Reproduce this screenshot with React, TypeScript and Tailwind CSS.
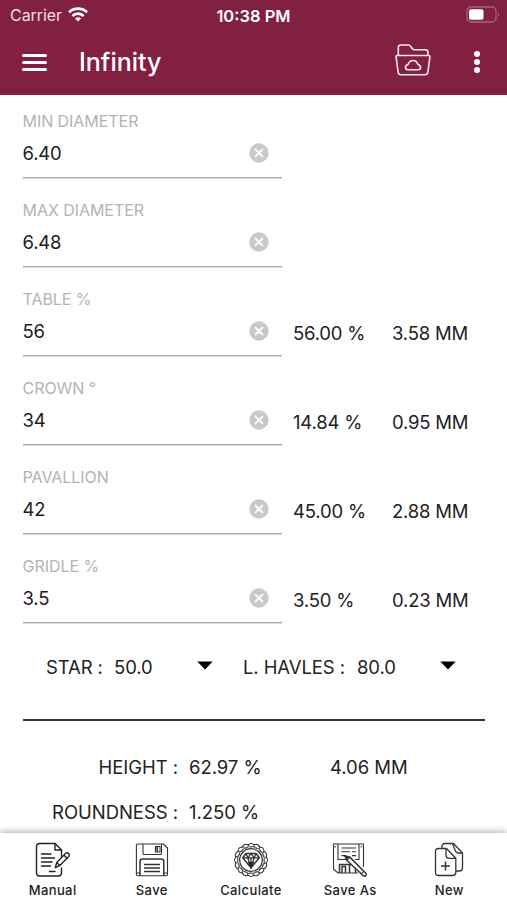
import type { ReactNode } from "react";

type Field = {
  label: string;
  value: string;
  percent?: string;
  mm?: string;
};

const FIELDS: Field[] = [
  { label: "MIN DIAMETER", value: "6.40" },
  { label: "MAX DIAMETER", value: "6.48" },
  { label: "TABLE %", value: "56", percent: "56.00 %", mm: "3.58 MM" },
  { label: "CROWN °", value: "34", percent: "14.84 %", mm: "0.95 MM" },
  { label: "PAVALLION", value: "42", percent: "45.00 %", mm: "2.88 MM" },
  { label: "GRIDLE %", value: "3.5", percent: "3.50 %", mm: "0.23 MM" },
];

// 16 bumps around the badge rim
const RIM_ANGLES = Array.from({ length: 16 }, (_, i) => i * 22.5);

function WifiIcon() {
  return (
    <svg width="20" height="15" viewBox="0 0 20 15" fill="none" stroke="#fff" strokeWidth="2.7">
      <path d="M1 5.3C6 .4 14 .4 19 5.3" />
      <path d="M4.4 8.9c3.2-3 8-3 11.2 0" />
      <path d="M10 14.6 6.9 11.5c1.7-1.6 4.5-1.6 6.2 0z" fill="#fff" stroke="none" />
    </svg>
  );
}

function BatteryIcon() {
  return (
    <svg width="34" height="18" viewBox="0 0 34 18" fill="none">
      <rect x="1" y="1" width="29" height="15" rx="4" stroke="#a8637d" strokeWidth="1.3" />
      <rect x="3" y="3.3" width="14.5" height="10.4" rx="2" fill="#fff" />
      <path d="M31.8 6.3c1.7.7 1.7 3.7 0 4.4z" fill="#a8637d" />
    </svg>
  );
}

function FolderCloudIcon() {
  return (
    <svg width="36" height="32" viewBox="0 0 36 32" fill="none" stroke="#ffe4ed" strokeWidth="1.6" strokeLinejoin="round" strokeLinecap="round">
      <path d="M3.3 11.3V3.5Q3.3 1 5.8 1h7.3q1.5 0 2.3 1.1l2 2.7q.8 1 2.1 1h11q2.4 0 2.4 2.4v3.1" />
      <path d="M2.5 11.5h31q1.6 0 1.4 1.5l-2 15q-.3 2.8-3 2.8H6.1q-2.7 0-3-2.8L1.1 13q-.2-1.5 1.4-1.5z" />
      <path d="M13 25.8c-3.4 0-3.6-4 .2-5.6 1.8-5 7.8-5 9.6 0 3.8 1.600 3.600 5.600.2 5.600z" />
    </svg>
  );
}

function ClearIcon() {
  return (
    <svg width="20" height="20" viewBox="0 0 20 20">
      <circle cx="10" cy="10" r="9.7" fill="#c9c9c9" />
      <path d="m6.6 6.6 6.8 6.8m0-6.8-6.8 6.8" stroke="#fff" strokeWidth="2" strokeLinecap="round" />
    </svg>
  );
}

function ManualIcon() {
  return (
    <svg width="36" height="36" viewBox="0 0 36 36" fill="none" stroke="#222" strokeWidth="1.4" strokeLinecap="round" strokeLinejoin="round">
      <path d="M26.5 26v5q0 3-3 3h-19q-3 0-3-3V4.500q0-3 3-3H20L26.5 8v6.5" />
      <path d="M20 1.5V8h6.5" />
      <path d="M6.5 12H16M6.5 16h13M6.5 20H17M6.5 24h9M14.5 29.5H20" />
      <path d="m20.3 25.700 1.4-5.2 9-9.2q1.600-1.200 3 .1 1.300 1.400.1 3l-9 9.200zM29 13.300l3.100 3M21.700 20.500l3.100 3.100" />
    </svg>
  );
}

function SaveIcon() {
  return (
    <svg width="34" height="36" viewBox="0 0 34 36" fill="none" stroke="#333" strokeWidth="1.1" strokeLinejoin="round">
      <path d="M3 2h25.5l4 4v26q0 1.8-1.8 1.8H3.200q-1.800 0-1.800-1.800V3.600Q1.400 2 3 2z" />
      <path d="M8 2v9.500q0 1 1 1h16.500q1 0 1-1V2M20.500 4.500H25V10h-4.500z" />
      <path d="M22.2 5v4.5" strokeWidth="1.6" />
      <path d="M5 33.800V19.500Q5 17 7.500 17h18.800q2.500 0 2.500 2.500v14.300" strokeWidth="1.5" />
      <path d="M9 22.5h16M9 26h16M9 29.500h16" strokeWidth="1.3" />
      <path d="M1.5 31H5M29 31h3.500" />
    </svg>
  );
}

function CalculateIcon() {
  return (
    <svg width="36" height="36" viewBox="0 0 36 36" fill="none" stroke="#333" strokeWidth="1">
      {RIM_ANGLES.map((angle) => (
        <path key={angle} d="M14.8 2.8q3.200-3 6.400 0M14.8 2.8q2.500 3.600 5.700 1.700" transform={`rotate(${angle} 18 18)`} />
      ))}
      <circle cx="18" cy="18" r="13.5" strokeWidth=".8" stroke="#666" />
      <circle cx="18" cy="18" r="11.3" strokeWidth="1.2" />
      <path d="M13 11.5h10l3.3 4.3L18 25.800 9.700 15.800z" strokeWidth="1.5" strokeLinejoin="round" />
      <path d="M9.700 15.800h16.600M13 11.500l1.800 4.300 3.200-4.300 3.200 4.300 1.800-4.300M14.800 15.800 18 25.800l3.200-10M18 16v9" strokeWidth="1.3" />
      <path d="m14.800 20 3.200 5.500 3.200-5.500z" fill="#222" stroke="none" />
    </svg>
  );
}

function SaveAsIcon() {
  return (
    <svg width="36" height="36" viewBox="0 0 36 36" fill="none" stroke="#333" strokeWidth="1.1" strokeLinejoin="round">
      <path d="M26 31H6l-4.500-4V2h30v23" />
      <path d="M6 2v15.500h10M27 2v15.500h-4" />
      <path d="M9.500 6H24M9.500 9.800H18m2 0h4M9.500 13.600H14m6 0h4" />
      <path d="M3.200 4v1.500M29.200 4v1.500" />
      <path d="M7.500 31v-8.500h13M10 31v-6.500h3.500V31M17.500 31v-8M23.500 27v4" strokeWidth="1.5" />
      <path d="m13 14 4.800 1.100 16 16.200q1 1.200 0 2.400-1.200 1-2.500 0L15 18.500z" fill="#fff" strokeWidth="1.5" />
      <path d="m17.800 15.100-2.800 3.400M31.800 29.300l-2.700 2.500" />
      <path d="m13 14 3.500 1-2 2.200z" fill="#222" />
    </svg>
  );
}

function NewIcon() {
  return (
    <svg width="30" height="36" viewBox="0 0 30 36" fill="none" stroke="#333" strokeWidth="1.3" strokeLinejoin="round">
      <path d="M8 6.500v-2q0-3 3-3h8.500l9 9.500v15q0 3-3 3H22" />
      <path d="M18.500 1.500 21 8q1 3 3.500 3h4" />
      <path d="M4.500 6.500h8l9.300 9.800v14.200q0 3-3 3H4.500q-3 0-3-3v-21q0-3 3-3z" fill="#fff" />
      <path d="M12 6.500v6.800q0 3 3 3h6.800" />
      <path d="M11.500 19.500v9M7 24h9" strokeWidth="1.5" />
    </svg>
  );
}

const TABS: { label: string; icon: ReactNode }[] = [
  { label: "Manual", icon: <ManualIcon /> },
  { label: "Save", icon: <SaveIcon /> },
  { label: "Calculate", icon: <CalculateIcon /> },
  { label: "Save As", icon: <SaveAsIcon /> },
  { label: "New", icon: <NewIcon /> },
];

function Caret() {
  return (
    <svg className="mb-[3px]" width="16" height="9" viewBox="0 0 16 9">
      <path d="M.3.500h15.400L8 8.500z" fill="#000" />
    </svg>
  );
}

function FieldRow({ field }: { field: Field }) {
  return (
    <div className="flex h-[89px] pl-[22.5px]">
      <div className="flex h-[83.5px] w-[259px] flex-col pt-[17px]">
        <span className="text-[16px] leading-[18px] tracking-[-0.05px] text-[#b3b3b3]">{field.label}</span>
        <div className="mt-[11px] flex h-6 items-center justify-between pr-[12.6px]">
          <span className="text-[18.5px] leading-6 tracking-[-0.2px] text-[#1c1c1c]">{field.value}</span>
          <ClearIcon />
        </div>
        <div className="mt-[12px] h-[1px] bg-[#aaa]" />
        <div className="h-[1px] bg-[#d8d8d8]" />
      </div>
      {field.percent && (
        <div className="mt-[48px] flex h-6 pl-[11.5px] text-[18.5px] leading-6 tracking-[-0.2px]">
          <span className="w-[99px]">{field.percent}</span>
          <span>{field.mm}</span>
        </div>
      )}
    </div>
  );
}

export default function App() {
  return (
    <div className="flex h-[900px] w-[507px] flex-col overflow-hidden bg-white font-['Inter','Roboto',sans-serif] text-[#222]">
      <header className="h-[95px] shrink-0 bg-[#822042] text-white">
        {/* Status bar */}
        <div className="grid h-[29px] grid-cols-3 items-center pr-[7px] pl-[10px]">
          <div className="flex items-center gap-[6px] text-[16px] tracking-[-0.05px] text-[#f5dce5]">
            Carrier
            <WifiIcon />
          </div>
          <span className="pt-0.5 pr-[3px] text-center text-[16.5px] leading-6 font-semibold">10:38 PM</span>
          <div className="flex justify-end">
            <BatteryIcon />
          </div>
        </div>
        {/* Title bar */}
        <div className="flex h-[66px] items-center pr-[27px] pl-[22px]">
          <div className="flex w-[25px] flex-col gap-1">
            <span className="h-[3px] rounded-full bg-white" />
            <span className="h-[3px] rounded-full bg-white" />
            <span className="h-[3px] rounded-full bg-white" />
          </div>
          <h1 className="ml-8 pt-0.5 text-[25px] font-medium">Infinity</h1>
          <div className="ml-auto flex items-center gap-[43px]">
            <div className="-mt-1">
              <FolderCloudIcon />
            </div>
            <div className="flex flex-col gap-[2px]">
              <span className="size-1.5 rounded-full bg-white" />
              <span className="size-1.5 rounded-full bg-white" />
              <span className="size-1.5 rounded-full bg-white" />
            </div>
          </div>
        </div>
      </header>

      <main className="h-[738px] shrink-0 overflow-hidden">
        {FIELDS.map((field) => (
          <FieldRow key={field.label} field={field} />
        ))}

        <div className="mt-[26px] flex h-6 items-center pl-[46px] text-[18.5px] leading-6 tracking-[-0.1px]">
          <span className="w-[68px]">STAR :</span>
          <span className="w-[83px]">50.0</span>
          <Caret />
          <span className="ml-[30px] w-[114px] whitespace-nowrap">L. HAVLES :</span>
          <span className="w-[83px]">80.0</span>
          <Caret />
        </div>

        <div className="mt-[39.5px] mr-[22px] ml-[23px] h-[2px] bg-[#333]" />

        <div className="mt-[34.5px] flex h-6 text-[18.5px] leading-6 tracking-[-0.05px]">
          <span className="w-[178px] text-right">HEIGHT :</span>
          <span className="ml-[11px] w-[141px]">62.97 %</span>
          <span>4.06 MM</span>
        </div>
        <div className="mt-[21px] flex h-6 text-[18.5px] leading-6 tracking-[-0.05px]">
          <span className="w-[178px] text-right">ROUNDNESS :</span>
          <span className="ml-[11px]">1.250 %</span>
        </div>
      </main>

      <nav className="relative flex h-[67px] shrink-0 bg-white pr-[8px] pl-[3px] shadow-[0_-1px_7px_rgba(0,0,0,0.35)]">
        {TABS.map((tab) => (
          <button key={tab.label} type="button" className="flex flex-1 flex-col items-center pt-[9px]">
            {tab.icon}
            <span className="mt-[3px] text-[13px] leading-[18px] font-medium tracking-[0.4px]">{tab.label}</span>
          </button>
        ))}
      </nav>
    </div>
  );
}
